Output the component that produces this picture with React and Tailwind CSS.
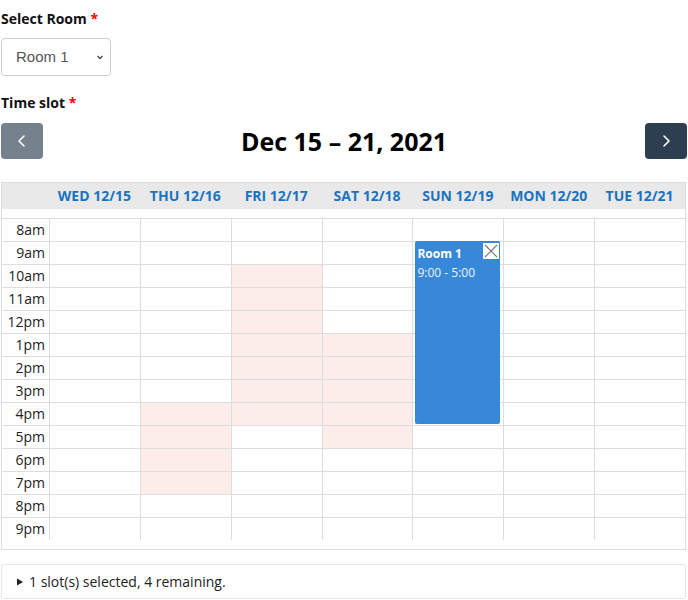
import React from "react"

const days = ["WED 12/15", "THU 12/16", "FRI 12/17", "SAT 12/18", "SUN 12/19", "MON 12/20", "TUE 12/21"]
const hours = ["8am", "9am", "10am", "11am", "12pm", "1pm", "2pm", "3pm", "4pm", "5pm", "6pm", "7pm", "8pm", "9pm"]

// busy ranges per day column, as [startIndex, endIndex) into hours
const busy = {
  1: [8, 12],
  2: [2, 9],
  3: [5, 10],
}

function Chevron({ dir }) {
  return (
    <svg width="16" height="16" viewBox="0 0 16 16" fill="none" stroke="white" strokeWidth="1.6" strokeLinecap="round" strokeLinejoin="round">
      {dir === "left" ? <path d="M10 3 L5 8 L10 13" /> : <path d="M6 3 L11 8 L6 13" />}
    </svg>
  )
}

function DayColumn({ index }) {
  const range = busy[index]
  return (
    <div className="relative flex-1 flex flex-col border-l border-[#ddd]">
      {hours.map((h, i) => {
        const isBusy = range && i >= range[0] && i < range[1]
        return (
          <div key={h} className={`h-[23px] border-t border-[#ddd] ${isBusy ? "bg-[#fcedeb]" : ""}`} />
        )
      })}
      {index === 4 && (
        <div className="absolute left-[2px] right-[3px] top-[23px] h-[183px] bg-[#3788d8] rounded-[2px] px-[2px] pt-[3px] text-white text-[12px] leading-[19px]">
          <div className="font-bold">Room 1</div>
          <div className="text-[#eef4fb]">9:00 - 5:00</div>
          <div className="absolute top-[2px] right-[1px] w-[16px] h-[16px] bg-white flex items-center justify-center">
            <svg width="16" height="16" viewBox="0 0 16 16" stroke="#777" strokeWidth="1.1">
              <path d="M2 2 L14 14 M14 2 L2 14" />
            </svg>
          </div>
        </div>
      )}
    </div>
  )
}

function App() {
  return (
    <div className="px-[1px] pt-[9px] font-['Open_Sans',sans-serif] text-[14px] text-[#212529]">
      <div className="font-bold leading-[20px] text-[#111]">
        Select Room <span className="text-[#ff0000]">*</span>
      </div>
      <div className="mt-[9px] w-[110px] h-[38px] border border-[#ccc] rounded-[4px] flex items-center justify-between pl-[14px] pr-[5px] font-['Liberation_Sans',Arial,sans-serif] text-[15px] text-[#555]">
        <span>Room 1</span>
        <svg width="10" height="10" viewBox="0 0 10 10" fill="none" stroke="#444" strokeWidth="1.3">
          <path d="M2.5 4 L5 6.5 L7.5 4" />
        </svg>
      </div>

      <div className="mt-[17px] font-bold leading-[20px] text-[#111]">
        Time slot <span className="text-[#ff0000]">*</span>
      </div>

      <div className="mt-[10px] flex items-center justify-between h-[36px]">
        <button className="w-[42px] h-[36px] rounded-[4px] bg-[#2c3e50] opacity-65 flex items-center justify-center">
          <Chevron dir="left" />
        </button>
        <h2 className="text-[25px] font-bold text-black leading-[32px]">Dec 15 – 21, 2021</h2>
        <button className="w-[42px] h-[36px] rounded-[4px] bg-[#2c3e50] flex items-center justify-center">
          <Chevron dir="right" />
        </button>
      </div>

      <div className="mt-[23px] mr-[1px] border border-[#ddd] pb-[9px]">
        <div className="flex h-[26px] bg-[#e9e9e9] items-center">
          <div className="w-[47px]" />
          {days.map((d) => (
            <div key={d} className="flex-1 text-center font-bold text-[#1a73c0] leading-[26px]">
              {d}
            </div>
          ))}
        </div>
        <div className="h-[9px]" />
        <div className="flex">
          <div className="w-[47px] flex flex-col">
            {hours.map((h) => (
              <div key={h} className="h-[23px] border-t border-[#ddd] text-right pr-[4px] leading-[22px] text-[#222]">
                {h}
              </div>
            ))}
          </div>
          {days.map((d, i) => (
            <DayColumn key={d} index={i} />
          ))}
        </div>
      </div>

      <div className="mt-[14px] mr-[1px] h-[35px] border border-[#e6e6e6] rounded-[2px] flex items-center pl-[14px] text-[#222]">
        <svg width="8" height="8" viewBox="0 0 8 8" className="mr-[5px]">
          <path d="M1 0.5 L7 4 L1 7.5 Z" fill="#222" />
        </svg>
        1 slot(s) selected, 4 remaining.
      </div>
    </div>
  )
}

export default App
